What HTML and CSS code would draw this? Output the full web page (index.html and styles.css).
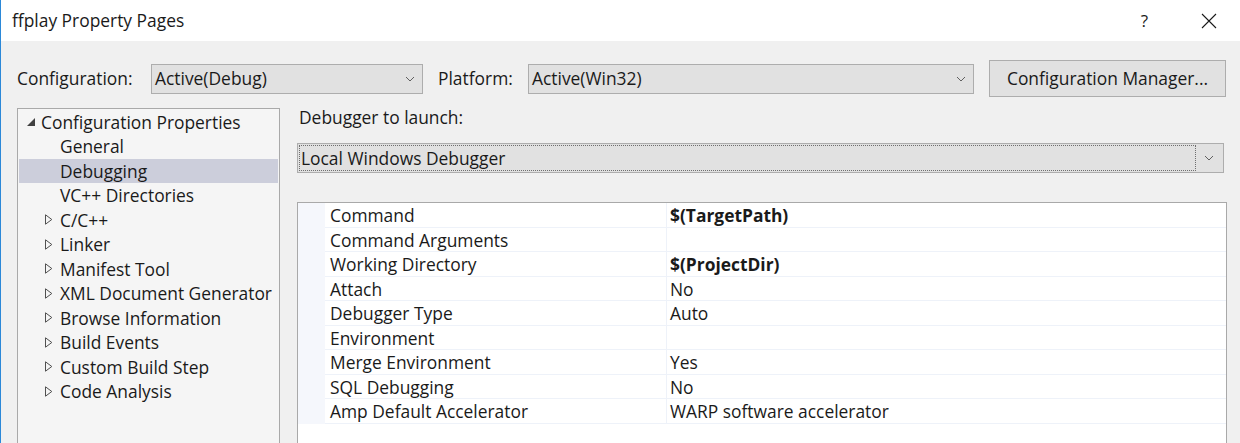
FILE: index.html
```html
<!DOCTYPE html>
<html>
<head>
<meta charset="utf-8">
<title>ffplay Property Pages</title>
<link rel="stylesheet" href="styles.css">
</head>
<body>
<div class="window">
  <div class="titlebar">
    <div class="title">ffplay Property Pages</div>
    <div class="caption-buttons">
      <span class="help">?</span>
      <svg class="close" width="18" height="18" viewBox="0 0 18 18"><path d="M2 2 L16 16 M16 2 L2 16" stroke="#1a1a1a" stroke-width="1.1" fill="none"/></svg>
    </div>
  </div>
  <div class="content">
    <div class="config-row">
      <label class="lbl lbl-config">Configuration:</label>
      <div class="combo combo-config">
        <span class="combo-text">Active(Debug)</span>
        <svg class="chev" width="10" height="6" viewBox="0 0 10 6"><path d="M1 1 L5 5 L9 1" stroke="#606060" stroke-width="1" fill="none"/></svg>
      </div>
      <label class="lbl lbl-platform">Platform:</label>
      <div class="combo combo-platform">
        <span class="combo-text">Active(Win32)</span>
        <svg class="chev" width="10" height="6" viewBox="0 0 10 6"><path d="M1 1 L5 5 L9 1" stroke="#606060" stroke-width="1" fill="none"/></svg>
      </div>
      <button class="btn">Configuration Manager...</button>
    </div>
    <div class="main">
      <div class="tree">
        <div class="tree-row root"><span class="tri-open"></span><span>Configuration Properties</span></div>
        <div class="tree-row child"><span>General</span></div>
        <div class="tree-row child selected"><span>Debugging</span></div>
        <div class="tree-row child"><span>VC++ Directories</span></div>
        <div class="tree-row node"><svg class="tri" width="8" height="11" viewBox="0 0 8 11"><path d="M0.5 0.8 L6.8 5.5 L0.5 10.2 Z" stroke="#505050" stroke-width="1" fill="none"/></svg><span>C/C++</span></div>
        <div class="tree-row node"><svg class="tri" width="8" height="11" viewBox="0 0 8 11"><path d="M0.5 0.8 L6.8 5.5 L0.5 10.2 Z" stroke="#505050" stroke-width="1" fill="none"/></svg><span>Linker</span></div>
        <div class="tree-row node"><svg class="tri" width="8" height="11" viewBox="0 0 8 11"><path d="M0.5 0.8 L6.8 5.5 L0.5 10.2 Z" stroke="#505050" stroke-width="1" fill="none"/></svg><span>Manifest Tool</span></div>
        <div class="tree-row node"><svg class="tri" width="8" height="11" viewBox="0 0 8 11"><path d="M0.5 0.8 L6.8 5.5 L0.5 10.2 Z" stroke="#505050" stroke-width="1" fill="none"/></svg><span>XML Document Generator</span></div>
        <div class="tree-row node"><svg class="tri" width="8" height="11" viewBox="0 0 8 11"><path d="M0.5 0.8 L6.8 5.5 L0.5 10.2 Z" stroke="#505050" stroke-width="1" fill="none"/></svg><span>Browse Information</span></div>
        <div class="tree-row node"><svg class="tri" width="8" height="11" viewBox="0 0 8 11"><path d="M0.5 0.8 L6.8 5.5 L0.5 10.2 Z" stroke="#505050" stroke-width="1" fill="none"/></svg><span>Build Events</span></div>
        <div class="tree-row node"><svg class="tri" width="8" height="11" viewBox="0 0 8 11"><path d="M0.5 0.8 L6.8 5.5 L0.5 10.2 Z" stroke="#505050" stroke-width="1" fill="none"/></svg><span>Custom Build Step</span></div>
        <div class="tree-row node"><svg class="tri" width="8" height="11" viewBox="0 0 8 11"><path d="M0.5 0.8 L6.8 5.5 L0.5 10.2 Z" stroke="#505050" stroke-width="1" fill="none"/></svg><span>Code Analysis</span></div>
      </div>
      <div class="right">
        <div class="launch-label">Debugger to launch:</div>
        <div class="combo combo-launch">
          <span class="combo-focus">Local Windows Debugger</span>
          <span class="combo-drop"><svg width="10" height="6" viewBox="0 0 10 6"><path d="M1 1 L5 5 L9 1" stroke="#606060" stroke-width="1" fill="none"/></svg></span>
        </div>
        <div class="grid">
          <div class="grid-row"><span class="gutter"></span><span class="name">Command</span><span class="value bold">$(TargetPath)</span></div>
          <div class="grid-row"><span class="gutter"></span><span class="name">Command Arguments</span><span class="value"></span></div>
          <div class="grid-row"><span class="gutter"></span><span class="name">Working Directory</span><span class="value bold">$(ProjectDir)</span></div>
          <div class="grid-row"><span class="gutter"></span><span class="name">Attach</span><span class="value">No</span></div>
          <div class="grid-row"><span class="gutter"></span><span class="name">Debugger Type</span><span class="value">Auto</span></div>
          <div class="grid-row"><span class="gutter"></span><span class="name">Environment</span><span class="value"></span></div>
          <div class="grid-row"><span class="gutter"></span><span class="name">Merge Environment</span><span class="value">Yes</span></div>
          <div class="grid-row"><span class="gutter"></span><span class="name">SQL Debugging</span><span class="value">No</span></div>
          <div class="grid-row"><span class="gutter"></span><span class="name">Amp Default Accelerator</span><span class="value">WARP software accelerator</span></div>
          <div class="grid-fill"></div>
        </div>
      </div>
    </div>
  </div>
</div>
</body>
</html>
```

FILE: styles.css
```css
* { box-sizing: border-box; }
html, body { margin: 0; padding: 0; }
body {
  width: 1240px;
  height: 443px;
  overflow: hidden;
  background: #f0f0f0;
  font-family: "Open Sans", "Noto Sans", sans-serif;
  font-size: 17.4px;
  color: #1a1a1a;
}
.window {
  width: 1240px;
  height: 443px;
  border-left: 1px solid #2b88d8;
  display: flex;
  flex-direction: column;
  background: #f0f0f0;
}
.titlebar {
  height: 41px;
  flex: none;
  background: #ffffff;
  display: flex;
  align-items: center;
  justify-content: space-between;
}
.title {
  padding-left: 11px;
  font-size: 17.4px;
  color: #1a1a1a;
  padding-bottom: 1px;
}
.caption-buttons {
  display: flex;
  align-items: center;
  padding-right: 22px;
}
.help {
  font-size: 17px;
  color: #1a1a1a;
  margin-right: 52px;
}
.close { display: block; }
.content {
  flex: 1;
  display: flex;
  flex-direction: column;
  padding-left: 16px;
}
.config-row {
  display: flex;
  align-items: center;
  height: 37px;
  margin-top: 19px;
}
.lbl { font-size: 17.4px; color: #1a1a1a; padding-bottom: 2px; }
.lbl-config { width: 134px; }
.lbl-platform { margin-left: 15px; width: 90px; }
.combo {
  height: 30px;
  background: #e1e1e1;
  border: 1px solid #adadad;
  display: flex;
  align-items: center;
  justify-content: space-between;
}
.combo-text { padding-left: 3px; padding-bottom: 2px; }
.chev { margin-right: 7px; }
.combo-config { width: 272px; }
.combo-platform { width: 446px; }
.btn {
  margin-left: 15px;
  width: 237px;
  height: 37px;
  background: #e1e1e1;
  border: 1px solid #adadad;
  font-family: inherit;
  font-size: 17.4px;
  color: #1a1a1a;
  padding: 0 0 2px 0;
}
.main {
  display: flex;
  margin-top: 11px;
  flex: 1;
  min-height: 0;
}
.tree {
  width: 263px;
  background: #f5f5f5;
  border: 1px solid #a9a9a9;
  border-bottom: none;
  padding: 0 1px;
  padding-top: 0.5px;
}
.tree-row {
  height: 24.5px;
  display: flex;
  align-items: center;
  white-space: nowrap;
}
.tree-row.root { padding-left: 8px; }
.tri-open {
  width: 0;
  height: 0;
  border-left: 8px solid transparent;
  border-bottom: 8px solid #404040;
  margin-right: 6px;
  margin-top: 1px;
}
.tree-row.child { padding-left: 41px; }
.tree-row.selected { background: #cccedb; }
.tree-row.node { padding-left: 26px; }
.tri { margin-right: 7px; display: block; }
.right {
  margin-left: 17px;
  width: 930px;
  display: flex;
  flex-direction: column;
}
.launch-label {
  height: 20px;
  line-height: 20px;
  padding-left: 2px;
  margin-top: -1px;
  margin-bottom: 1px;
}
.combo-launch {
  margin-top: 15px;
  width: 927px;
  padding: 1px;
}
.combo-focus {
  flex: 1;
  height: 26px;
  border: 1px dotted #6e6e6e;
  display: flex;
  align-items: center;
  padding-left: 1px;
  padding-bottom: 1px;
}
.combo-drop {
  width: 26px;
  display: flex;
  align-items: center;
  justify-content: center;
}
.combo-drop svg { display: block; }
.grid {
  margin-top: 29px;
  flex: 1;
  background: #ffffff;
  border: 1px solid #a9a9a9;
  border-bottom: none;
  display: flex;
  flex-direction: column;
}
.grid-row {
  height: 24.5px;
  display: flex;
  flex: none;
}
.gutter {
  width: 27px;
  background: #f5f7fc;
  flex: none;
}
.name {
  width: 342px;
  flex: none;
  padding-left: 5px;
  padding-top: 1px;
  display: flex;
  align-items: center;
  border-bottom: 1px solid #eef2f9;
  border-right: 1px solid #eef2f9;
  white-space: nowrap;
}
.value {
  flex: 1;
  padding-left: 3px;
  padding-top: 1px;
  display: flex;
  align-items: center;
  border-bottom: 1px solid #eef2f9;
  white-space: nowrap;
}
.value.bold { font-weight: 700; }
.grid-fill { flex: 1; }
```
